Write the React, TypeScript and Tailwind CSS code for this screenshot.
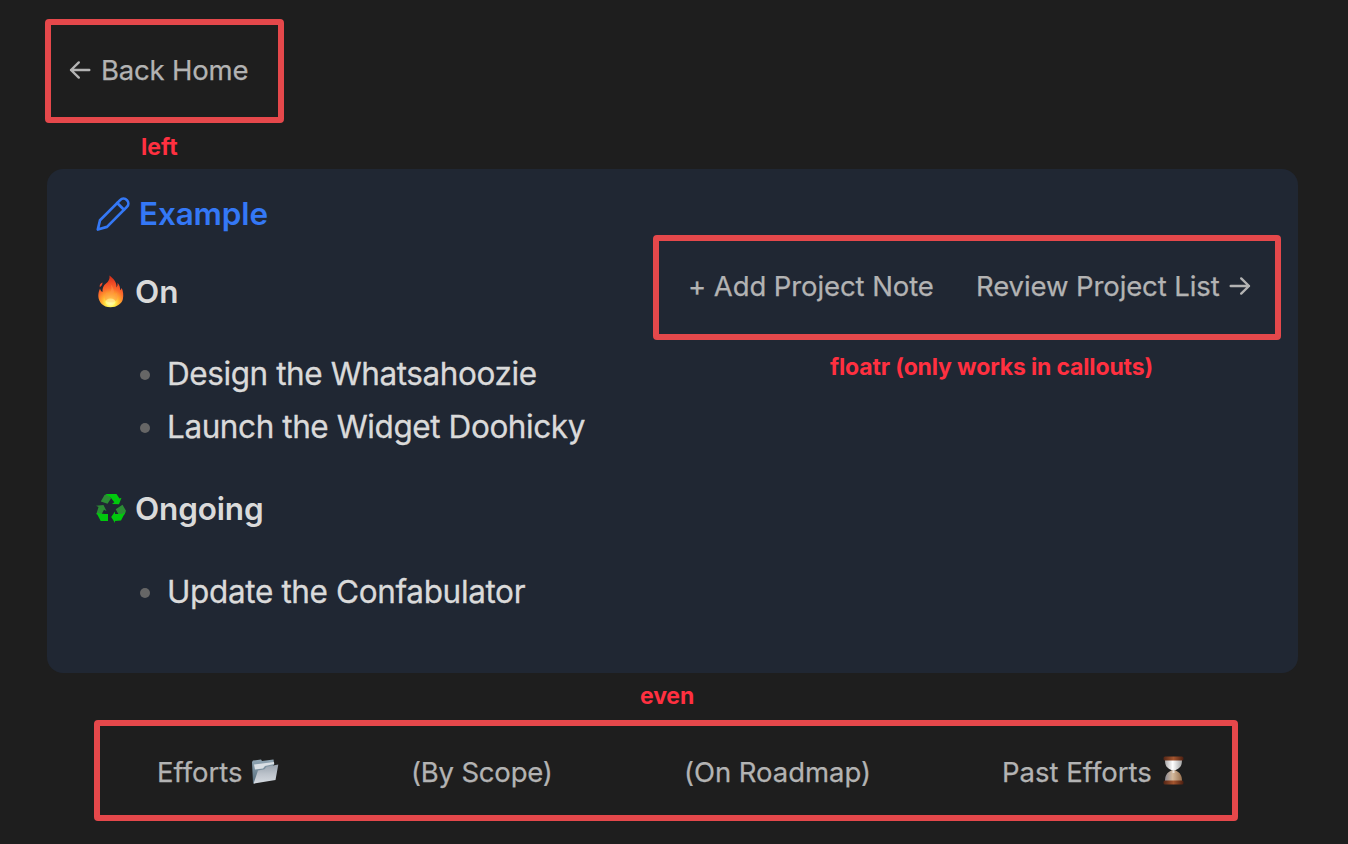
import type { ReactNode } from "react";

function Outline({ className, children }: { className: string; children: ReactNode }) {
  return (
    <div className={`box-border rounded-[4px] border-[6px] border-[#e5484b] text-[27.5px] leading-[34px] font-normal whitespace-nowrap text-[#b3b3b3] [-webkit-text-stroke:0.25px_currentColor] ${className}`}>
      {children}
    </div>
  );
}

function Arrow({ className }: { className: string }) {
  return (
    <svg className={className} viewBox="0 0 22 20" width="22" height="20" fill="none" stroke="currentColor" strokeWidth="2.4" strokeLinecap="round" strokeLinejoin="round">
      <path d="M20.3 10H2M9.800 2.400L2 10l7.800 7.600" />
    </svg>
  );
}

function Pencil() {
  return (
    <svg className="h-[36px] w-[36px] shrink-0 text-[#3478f6]" viewBox="0 0 36 36" fill="none" stroke="currentColor" strokeWidth="2.7" strokeLinecap="round" strokeLinejoin="round">
      <path d="M2.800 33.500l2.200-9.200L25.100 4.100a4.800 4.800 0 0 1 6.800 6.800L12 30.900z" />
      <path d="M22.200 7l6.800 6.800" />
    </svg>
  );
}

function Fire() {
  return (
    <svg className="h-[33px] w-[28px] shrink-0" viewBox="0 0 28 33">
      <defs>
        <radialGradient id="flame" cx="13.5" cy="28" r="25" gradientUnits="userSpaceOnUse">
          <stop offset="0" stopColor="#fffcc0" />
          <stop offset=".18" stopColor="#fff04a" />
          <stop offset=".36" stopColor="#ffab2e" />
          <stop offset=".58" stopColor="#fb6a2c" />
          <stop offset=".8" stopColor="#f04a25" />
          <stop offset="1" stopColor="#d8351c" />
        </radialGradient>
      </defs>
      <path fill="url(#flame)" d="M12.500 .500c4 3 7.500 7 7 12 .8-1 1.300-2.500 1-4.700 2 2.200 2.800 4.700 2.600 7.400.8-.5 1.200-1.200 1.600-2.200 1.500 3 2 7 1.200 11C25 28.500 20 32.300 13.500 32.300 6 32.300 1.500 27 1.300 21c-.1-3 .7-5 1.700-7.500.5 2 1.200 3 2.500 3.500C5.300 13 6.500 10.500 9 8.500 11.500 6.500 13 4 12.500 .500z" />
      <path fill="#ee4a2a" d="M5.500 7.500c-2.200.6-3.200 2.300-2.700 4.700 1.700-1 2.700-2.400 2.700-4.700z" />
      <path fill="#ff9348" opacity=".55" d="M13.500 9c2 4 .5 6-.5 8.500-1 2.500-2.500 2-3-.5-2 2.500-2.800 5-2 7.500 1.500 4 10 4 12 0 1-3 .5-4.500-.5-6.500-1 2-2 2.500-3 1.500 1-3.500 0-7-3-10.500z" />
      <ellipse cx="13.500" cy="27" rx="5" ry="3.500" fill="#fffaa0" opacity=".6" />
    </svg>
  );
}

function Recycle() {
  return (
    <svg className="h-[30px] w-[32px] shrink-0" viewBox="0 0 32 30">
      <path fill="#2c8c35" d="M5.800 8.500L9.500 2l3-1L16 5.500l-3.500 5.300z" />
      <path fill="#00c90d" d="M10.500 1h11l3 4.500 2-.8-2.500 6.500-7-.3 2.300-1.600L16 5z" />
      <path fill="#2c8c35" d="M24.500 13.800l3-2 3.500 6-1.500 3.700-6-.3-2.800-5z" />
      <path fill="#00c90d" d="M30.500 19l-4.500 8.500-6 .4v2L16.200 24l3.800-5.600v2.500h7z" />
      <path fill="#2c8c35" d="M1 12.700l7.500-.7 3 6-2.500-1.300-2.500 4.500H1.300L3.500 14z" />
      <path fill="#00c90d" d="M1.500 20l8 .9H13v7H5.700z" />
    </svg>
  );
}

function Folder() {
  return (
    <svg className="-mt-[1px] h-[28px] w-[28px] shrink-0" viewBox="0 0 28 28">
      <defs>
        <linearGradient id="cover" x1="0" y1="0" x2="0" y2="1">
          <stop offset="0" stopColor="#98a2ad" />
          <stop offset=".5" stopColor="#bcc3cb" />
          <stop offset="1" stopColor="#d5dae0" />
        </linearGradient>
        <linearGradient id="back" x1="0" y1="0" x2="0" y2="1">
          <stop offset="0" stopColor="#92a7b5" />
          <stop offset="1" stopColor="#536a79" />
        </linearGradient>
      </defs>
      <path fill="url(#back)" d="M1 4L2 2.500l8-1 1 1.500L22.500 1.500l.7 5L4 25.500 2 25z" />
      <path fill="#d9dfe4" d="M3 6.500l20-2.500.2 2L14 8l-2 2.500-8 1z" />
      <path fill="url(#cover)" d="M2.500 25.700L7 12.500l6.500-1.200 2-2.500L27.300 6.500 24.500 22z" />
    </svg>
  );
}

function Hourglass() {
  return (
    <svg className="-mt-[3px] h-[29px] w-[21px] shrink-0" viewBox="0 0 21 29">
      <defs>
        <linearGradient id="wood" x1="0" x2="1">
          <stop offset="0" stopColor="#542616" />
          <stop offset=".5" stopColor="#a4552e" />
          <stop offset="1" stopColor="#4b1e10" />
        </linearGradient>
        <linearGradient id="glass" x1="0" x2="1">
          <stop offset="0" stopColor="#aaa9aa" />
          <stop offset=".45" stopColor="#ffffff" />
          <stop offset="1" stopColor="#a5a5a5" />
        </linearGradient>
        <linearGradient id="sand" x1="0" x2="1">
          <stop offset="0" stopColor="#8b8a93" />
          <stop offset=".45" stopColor="#d5b99c" />
          <stop offset="1" stopColor="#98704e" />
        </linearGradient>
      </defs>
      <path fill="url(#glass)" d="M2 4h17c0 5.500-1.500 8-6.800 10.200H8.800C3.500 12 2 9.500 2 4z" />
      <path fill="url(#sand)" d="M8.800 14.200h3.400C17.500 16.500 19 20 19 25H2c0-5 1.500-8.500 6.800-10.800z" />
      <path fill="#eee9e4" opacity=".8" d="M9.500 13.500h2v3.500h-2z" />
      <rect x=".5" y=".5" width="20" height="4" rx="1.500" fill="url(#wood)" />
      <rect x=".5" y="24.500" width="20" height="4" rx="1.500" fill="url(#wood)" />
    </svg>
  );
}

function Label({ className, children }: { className: string; children: ReactNode }) {
  return <p className={`text-[23px] leading-[28px] font-bold whitespace-nowrap text-[#ff3040] ${className}`}>{children}</p>;
}

function Item({ className, children }: { className: string; children: ReactNode }) {
  return (
    <li className="flex h-[53px] items-center gap-[17px] pl-[45px]">
      <span className="size-[10px] rounded-full bg-[#666666]" />
      <span className={`-mt-[2px] text-[31.5px] leading-[40px] font-normal whitespace-nowrap [-webkit-text-stroke:0.3px_currentColor] ${className}`}>{children}</span>
    </li>
  );
}

export default function App() {
  return (
    <main className="flex h-[844px] w-[1348px] flex-col overflow-hidden bg-[#1e1e1e] pt-[19px] font-['Inter',sans-serif] text-[#dadada]">
      <Outline className="ml-[45px] flex h-[104px] w-[239px] items-start pt-[28px] pl-[18px]">
        <Arrow className="mt-[7px] mr-[10px]" />
        <span className="tracking-[-0.2px]">Back Home</span>
      </Outline>
      <Label className="mt-[10px] ml-[141px]">left</Label>

      <section className="mt-[8px] ml-[47px] flex h-[504px] w-[1251px] shrink-0 rounded-[16px] bg-[#202733] pl-[48px]">
        <div className="w-[558px] pt-[26px]">
          <h1 className="flex h-[38px] items-center gap-[8px] text-[31.5px] font-semibold tracking-[-0.15px] text-[#3478f6]">
            <Pencil />
            <span>Example</span>
          </h1>
          <h2 className="mt-[39px] flex h-[38px] items-center gap-[10px] pl-[2px] text-[31.5px] font-semibold">
            <Fire />
            <span className="mt-[2px]">On</span>
          </h2>
          <ul className="mt-[38px]">
            <Item className="tracking-[-0.42px]">Design the Whatsahoozie</Item>
            <Item className="tracking-[-0.42px]">Launch the Widget Doohicky</Item>
          </ul>
          <h2 className="mt-[35px] flex h-[38px] items-center gap-[8px] text-[31.5px] font-semibold tracking-[-0.15px]">
            <Recycle />
            <span className="mt-[2px]">Ongoing</span>
          </h2>
          <ul className="mt-[39px]">
            <Item className="tracking-[-0.36px]">Update the Confabulator</Item>
          </ul>
        </div>
        <div className="pt-[66px]">
          <Outline className="flex h-[105px] w-[628px] items-start pt-[28px] pl-[29px]">
            <span className="w-[288px] tracking-[-0.09px]">+ Add Project Note</span>
            <span className="w-[253px] tracking-[-0.1px]">Review Project List</span>
            <Arrow className="mt-[7px] rotate-180" />
          </Outline>
          <Label className="mt-[13px] ml-[177px] tracking-[-0.15px]">floatr (only works in callouts)</Label>
        </div>
      </section>

      <Label className="mt-[9px] ml-[640px] tracking-[-0.15px]">even</Label>
      <Outline className="mt-[10px] ml-[94px] flex h-[101px] w-[1144px] shrink-0 items-start pt-[29px] pl-[57px]">
        <span className="flex w-[254px] items-center gap-[8px]">Efforts <Folder /></span>
        <span className="w-[273px] tracking-[-0.2px]">(By Scope)</span>
        <span className="w-[318px] tracking-[-0.05px]">(On Roadmap)</span>
        <span className="flex items-center gap-[11px]">Past Efforts <Hourglass /></span>
      </Outline>
    </main>
  );
}
